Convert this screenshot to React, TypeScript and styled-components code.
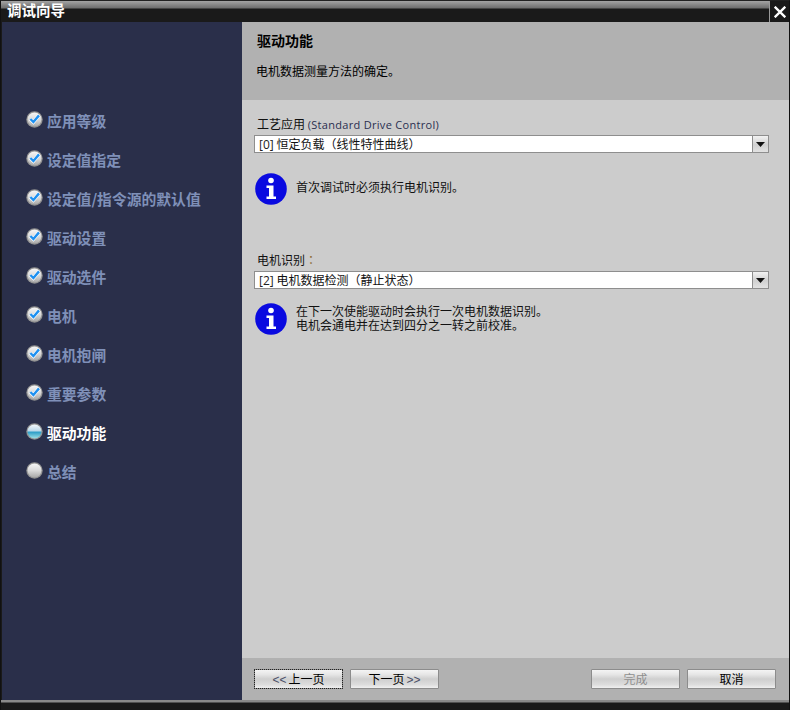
import React from 'react';
import styled, { createGlobalStyle } from 'styled-components';

const Global = createGlobalStyle`
  html, body { margin: 0; padding: 0; background: #1a1a1a; }
  body { font-family: "Liberation Sans", "Noto Sans CJK SC", sans-serif; }
  * { box-sizing: border-box; }
`;

const Win = styled.div`
  width: 790px; height: 710px; display: flex; flex-direction: column;
  background: #1a1a1a; overflow: hidden;
  border-top: 1px solid #222; border-left: 1px solid #111; border-right: 1px solid #111;
`;
const TitleBar = styled.div`
  height: 21px; display: flex; align-items: stretch; justify-content: space-between;
  background: linear-gradient(to bottom, #a4a4a4 0, #6e6e6e 7px, #1a1a1a 8px, #1a1a1a 100%);
`;
const TitleText = styled.div`
  color: #fff; font: bold 14.5px/21px "Noto Sans CJK SC", sans-serif; padding-left: 6px; margin-top: -2px;
`;
const CloseBox = styled.div`
  width: 20px; border-left: 1px solid #9a9a9a; background: #1a1a1a;
  display: flex; align-items: center; justify-content: center;
`;
const Body = styled.div`
  height: 678px; display: flex; margin-left: 1px;
`;
const Side = styled.div`
  width: 240px; background: #2a2f4a; padding: 79px 0 0 24px; display: flex; flex-direction: column;
`;
const Step = styled.div<{ $active?: boolean }>`
  height: 39px; display: flex; align-items: center; gap: 4px;
  color: ${p => (p.$active ? '#ffffff' : '#7f90b8')};
  font: bold 14.8px/39px "Noto Sans CJK SC", sans-serif;
`;
const IconSlot = styled.span`
  display: flex; flex: none; margin-top: -2px;
`;
const Main = styled.div`
  flex: 1; display: flex; flex-direction: column; min-width: 0;
`;
const Head = styled.div`
  height: 78px; background: #b1b1b1; padding: 8px 0 0 15px; color: #000;
`;
const HeadTitle = styled.div`
  font: bold 14px/20px "Noto Sans CJK SC", sans-serif;
`;
const HeadSub = styled.div`
  font: 12px/18px "Noto Sans CJK SC", sans-serif; margin-top: 12px; margin-left: -1px;
`;
const Content = styled.div`
  flex: 1; background: #cccccc; padding: 15px 20px 0 12px; display: flex; flex-direction: column;
`;
const Label = styled.div`
  font: 12px/17px "Noto Sans CJK SC", sans-serif; color: #111; padding-left: 3px; height: 20px;
`;
const Latin = styled.span`
  font-family: "Open Sans", "Liberation Sans", sans-serif; color: #2a2f50; letter-spacing: 0.3px; font-size: 11px;
`;
const Colon = styled.span`
  font-family: "Noto Sans CJK TC", sans-serif; color: #8a6a30;
`;
const Select = styled.div`
  height: 18px; background: #fff; border: 1px solid #8e8e8e; display: flex; align-items: stretch;
  font: 12px/15px "Noto Sans CJK SC", sans-serif; color: #111;
`;
const SelectText = styled.div`
  flex: 1; padding-left: 4px; white-space: pre;
`;
const Code = styled.span`
  font-family: "Open Sans", "Liberation Sans", sans-serif; font-size: 12px; color: #222;
`;
const Arrow = styled.div`
  width: 16px; border-left: 1px solid #8e8e8e;
  background: linear-gradient(to bottom, #f2f2f2, #d0d0d0 55%, #e2e2e2);
  display: flex; align-items: center; justify-content: center;
`;
const Info = styled.div<{ $h: number }>`
  display: flex; align-items: flex-start; gap: 9px; padding-left: 1px; height: ${p => p.$h}px;
`;
const Msg = styled.div<{ $top: number }>`
  font: 12px/14px "Noto Sans CJK SC", sans-serif; color: #111; padding-top: ${p => p.$top}px;
`;
const Foot = styled.div`
  height: 42px; background: #b1b1b1; padding: 11px 13px 0 12px; display: flex; gap: 7px;
`;
const Btn = styled.div<{ $off?: boolean; $focus?: boolean }>`
  width: 89px; height: 20px; border: 1px solid #8c8c8c; border-radius: 1px;
  background: linear-gradient(to bottom, #f4f4f4 0, #e6e6e6 25%, #cfcfcf 50%, #dcdcdc 80%, #f0f0f0 100%);
  font: 12px/18px "Noto Sans CJK SC", sans-serif; text-align: center;
  color: ${p => (p.$off ? '#8f8f8f' : '#000')};
  outline: ${p => (p.$focus ? '1px dotted #222' : 'none')};
  outline-offset: ${p => (p.$focus ? '-1px' : '0')};
`;
const Spacer = styled.div`
  flex: 1;
`;
const Angle = styled.span<{ $side: 'left' | 'right' }>`
  font-family: "Liberation Sans", sans-serif; font-size: 12px; color: #4a4f66;
  margin-${p => (p.$side === 'left' ? 'right' : 'left')}: 2px;
`;
const FootBar = styled.div`
  height: 10px; background: linear-gradient(to bottom, #8a8a8a 0, #8a8a8a 2px, #1a1a1a 3px);
  margin: 0 -1px;
`;
const Gap = styled.div<{ $h: number }>`
  height: ${p => p.$h}px; flex: none;
`;

const StepIcon = ({ kind }: { kind: 'done' | 'active' | 'todo' }) => {
  const id = `g-${kind}`;
  return (
    <svg width="17" height="17" viewBox="0 0 17 17">
      <defs>
        <linearGradient id={id} x1="0" y1="0" x2="0" y2="1">
          {kind === 'active' ? (
            <>
              <stop offset="0" stopColor="#f4f8fb" />
              <stop offset="0.45" stopColor="#bcd9ea" />
              <stop offset="0.55" stopColor="#2f9fc8" />
              <stop offset="1" stopColor="#9fe0e6" />
            </>
          ) : (
            <>
              <stop offset="0" stopColor="#f6f6f6" />
              <stop offset="0.5" stopColor="#dadada" />
              <stop offset="1" stopColor="#a8a8a8" />
            </>
          )}
        </linearGradient>
      </defs>
      <circle cx="8.5" cy="8.5" r="8.2" fill="#909090" />
      <circle cx="8.5" cy="8.5" r="7" fill={`url(#${id})`} />
      {kind === 'done' && (
        <>
          <path d="M4.2 8 L7.4 11.2 L13.2 4.2" fill="none" stroke="#ffffff" strokeWidth="3.6" />
          <path d="M4.4 8 L7.4 11 L13 4.4" fill="none" stroke="#1e90f0" strokeWidth="2.4" />
        </>
      )}
    </svg>
  );
};

const InfoIcon = () => (
  <svg width="32" height="32" viewBox="0 0 32 32" style={{ flex: 'none' }}>
    <circle cx="16" cy="16" r="15.8" fill="#0a0ae0" />
    <circle cx="16" cy="7.5" r="2.8" fill="#fff" />
    <path d="M11.5 12.5 H18.5 V23.5 H21 V26 H11.5 V23.5 H14 V15 H11.5 Z" fill="#fff" />
  </svg>
);

const DownArrow = () => (
  <svg width="9" height="5" viewBox="0 0 9 5">
    <path d="M0 0 H9 L4.5 5 Z" fill="#111" />
  </svg>
);

const steps: [string, 'done' | 'active' | 'todo'][] = [
  ['应用等级', 'done'],
  ['设定值指定', 'done'],
  ['设定值/指令源的默认值', 'done'],
  ['驱动设置', 'done'],
  ['驱动选件', 'done'],
  ['电机', 'done'],
  ['电机抱闸', 'done'],
  ['重要参数', 'done'],
  ['驱动功能', 'active'],
  ['总结', 'todo'],
];

export default function App() {
  return (
    <Win>
      <Global />
      <TitleBar>
        <TitleText>调试向导</TitleText>
        <CloseBox>
          <svg width="12" height="12" viewBox="0 0 12 12">
            <path d="M0.7 0.7 L11.3 11.3 M11.3 0.7 L0.7 11.3" stroke="#fff" strokeWidth="2.3" />
          </svg>
        </CloseBox>
      </TitleBar>
      <Body>
        <Side>
          {steps.map(([t, k]) => (
            <Step key={t} $active={k === 'active'}>
              <IconSlot><StepIcon kind={k} /></IconSlot>
              {t}
            </Step>
          ))}
        </Side>
        <Main>
          <Head>
            <HeadTitle>驱动功能</HeadTitle>
            <HeadSub>电机数据测量方法的确定。</HeadSub>
          </Head>
          <Content>
            <Label>
              工艺应用 <Latin>(Standard Drive Control)</Latin>
            </Label>
            <Select>
              <SelectText>
                <Code>[0]</Code> 恒定负载（线性特性曲线）
              </SelectText>
              <Arrow><DownArrow /></Arrow>
            </Select>
            <Gap $h={20} />
            <Info $h={32}>
              <InfoIcon />
              <Msg $top={7}>首次调试时必须执行电机识别。</Msg>
            </Info>
            <Gap $h={46} />
            <Label>电机识别<Colon>：</Colon></Label>
            <Select>
              <SelectText>
                <Code>[2]</Code> 电机数据检测（静止状态）
              </SelectText>
              <Arrow><DownArrow /></Arrow>
            </Select>
            <Gap $h={14} />
            <Info $h={32}>
              <InfoIcon />
              <Msg $top={1}>
                在下一次使能驱动时会执行一次电机数据识别。
                <br />
                电机会通电并在达到四分之一转之前校准。
              </Msg>
            </Info>
          </Content>
          <Foot>
            <Btn $focus><Angle $side="left">&lt;&lt;</Angle>上一页</Btn>
            <Btn>下一页<Angle $side="right">&gt;&gt;</Angle></Btn>
            <Spacer />
            <Btn $off>完成</Btn>
            <Btn>取消</Btn>
          </Foot>
        </Main>
      </Body>
      <FootBar />
    </Win>
  );
}
